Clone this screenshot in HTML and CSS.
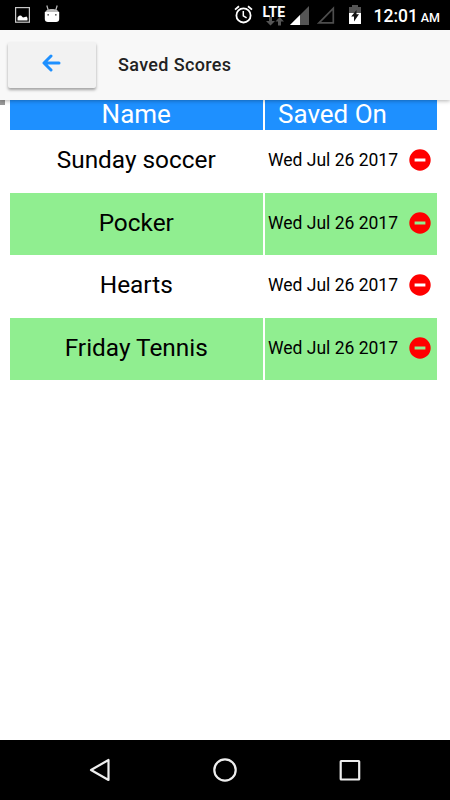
FILE: index.html
```html
<!DOCTYPE html>
<html lang="en">
<head>
    <meta charset="UTF-8">
    <meta name="viewport" content="width=device-width, initial-scale=1.0">
    <title>Saved Scores</title>
    <link rel="stylesheet" href="styles.css">
</head>
<body>
    <div class="status-bar">
        <div class="notifications">
            <svg class="icon-picture" width="15" height="16" viewBox="0 0 15 16">
                <rect x="0.6" y="0.6" width="13.8" height="14.6" fill="none" stroke="#c8c8c8" stroke-width="1.2"/>
                <path d="M2.5 13.5V10.5L4 8.8L6 8.5L8 10.5L10 10L11.5 9.5L12.5 11V13.5Z" fill="#fff"/>
            </svg>
            <svg class="icon-android" width="16" height="18" viewBox="0 0 16 18">
                <path d="M4.2 5L2.8 0.5M11.8 5L13.2 0.5" stroke="#bbb" stroke-width="1.2"/>
                <path d="M1 8C1 2.5 15 2.5 15 8Z" fill="#bbb"/>
                <path d="M0.8 7H15.2V14Q15.2 17 12 17H4Q0.8 17 0.8 14Z" fill="#fff"/>
                <rect x="3.4" y="9" width="1.6" height="1.6" fill="#666"/>
                <rect x="11" y="9" width="1.6" height="1.6" fill="#666"/>
            </svg>
        </div>
        <div class="system">
            <svg class="icon-alarm" width="19" height="19" viewBox="0 0 19 19" fill="none" stroke="#fff" stroke-width="1.8">
                <circle cx="9.5" cy="10.4" r="7.1"/>
                <path d="M9.3 6V10.8L12.6 12.8" stroke-width="1.5"/>
                <path d="M1 4.6L5 1.2M18 4.6L14 1.2"/>
            </svg>
            <div class="lte">
                <span>LTE</span>
                <svg width="18" height="9" viewBox="0 0 18 9" fill="#555">
                    <path d="M3 0H6V4H9L4.5 8.5L0 4H3ZM12 8.5V4.5H9.5L13.7 0L18 4.5H15V8.5Z"/>
                </svg>
            </div>
            <svg class="icon-signal" width="19" height="19" viewBox="0 0 19 19">
                <path d="M0 19L19 0V19Z" fill="#555"/>
                <path d="M0 19L10 9V19Z" fill="#fff"/>
            </svg>
            <svg class="icon-nosim" width="18" height="18" viewBox="0 0 18 18">
                <path d="M2 16.8L16.3 2.3V16.8Z" fill="none" stroke="#4d4d4d" stroke-width="1.7"/>
            </svg>
            <svg class="icon-battery" width="12" height="19" viewBox="0 0 12 19">
                <path d="M0 2H3V0H9V2H12V19H0Z" fill="#555"/>
                <path d="M0 8H12V19H0Z" fill="#fff"/>
                <path d="M7.5 5V9.2H10L5 16.5V11.5H2.2Z" fill="#111"/>
            </svg>
            <span class="clock">12:01 <small>AM</small></span>
        </div>
    </div>

    <div class="toolbar">
        <button class="back">
            <svg width="19" height="18" viewBox="0 0 19 18" fill="none" stroke="#1e90ff" stroke-width="3" stroke-linecap="round" stroke-linejoin="round">
                <path d="M9 2L2 9L9 16M2.5 9H17"/>
            </svg>
        </button>
        <h1>Saved Scores</h1>
    </div>

    <div class="content">
        <div class="scroll-mark"></div>
        <div class="scores">
            <div class="head name">Name</div>
            <div class="head saved">Saved On</div>

            <div class="name">Sunday soccer</div>
            <div class="date">Wed Jul 26 2017
                <svg class="remove" viewBox="0 0 22 22"><path fill-rule="evenodd" d="M11 0.3A10.7 10.7 0 1 0 11 21.7A10.7 10.7 0 1 0 11 0.3ZM5.6 9.6H16.4V12.4H5.6Z"/></svg>
            </div>

            <div class="name green">Pocker</div>
            <div class="date green">Wed Jul 26 2017
                <svg class="remove" viewBox="0 0 22 22"><path fill-rule="evenodd" d="M11 0.3A10.7 10.7 0 1 0 11 21.7A10.7 10.7 0 1 0 11 0.3ZM5.6 9.6H16.4V12.4H5.6Z"/></svg>
            </div>

            <div class="name">Hearts</div>
            <div class="date">Wed Jul 26 2017
                <svg class="remove" viewBox="0 0 22 22"><path fill-rule="evenodd" d="M11 0.3A10.7 10.7 0 1 0 11 21.7A10.7 10.7 0 1 0 11 0.3ZM5.6 9.6H16.4V12.4H5.6Z"/></svg>
            </div>

            <div class="name green">Friday Tennis</div>
            <div class="date green">Wed Jul 26 2017
                <svg class="remove" viewBox="0 0 22 22"><path fill-rule="evenodd" d="M11 0.3A10.7 10.7 0 1 0 11 21.7A10.7 10.7 0 1 0 11 0.3ZM5.6 9.6H16.4V12.4H5.6Z"/></svg>
            </div>
        </div>
    </div>

    <div class="nav-bar">
        <svg width="24" height="26" viewBox="0 0 24 26"><path d="M3 13L20.5 3V23Z"/></svg>
        <svg width="26" height="26" viewBox="0 0 26 26"><circle cx="13" cy="13" r="10.7"/></svg>
        <svg width="24" height="26" viewBox="0 0 24 26"><rect x="2.7" y="4" width="18.5" height="18.5" rx="0.5"/></svg>
    </div>
</body>
</html>
```
FILE: styles.css
```css
body {
    margin: 0;
    height: 800px;
    display: flex;
    flex-direction: column;
    overflow: hidden;
    background: #fff;
    color: #000;
    font-family: Roboto, sans-serif;
}

svg {
    display: block;
    flex: none;
}

/* Android status bar */
.status-bar {
    height: 30px;
    flex: none;
    display: flex;
    justify-content: space-between;
    background: #000;
    color: #fff;
}

.notifications,
.system {
    display: flex;
    align-items: flex-start;
}

.icon-picture {
    margin: 7px 0 0 15px;
}

.icon-android {
    margin: 5px 0 0 14px;
}

.system {
    padding-right: 10px;
}

.icon-alarm {
    margin-top: 5px;
}

.lte {
    width: 22px;
    margin: 6px 0 0 10px;
    font-size: 14px;
    font-weight: 700;
    line-height: 12px;
}

.lte svg {
    margin: -1px 0 0 3px;
}

.icon-signal {
    margin: 6px 0 0 5px;
}

.icon-nosim {
    margin: 6px 0 0 8px;
}

.icon-battery {
    margin: 5px 0 0 14px;
}

.clock {
    margin-left: 13px;
    font-size: 17.5px;
    font-weight: 500;
    line-height: 32px;
    word-spacing: -1.5px;
}

.clock small {
    font-size: 12.5px;
}

/* Toolbar */
.toolbar {
    height: 70px;
    flex: none;
    display: flex;
    align-items: center;
    background: #f8f8f8;
    box-shadow: 0 1px 4px rgba(0, 0, 0, 0.3);
    z-index: 1;
}

.back {
    width: 88px;
    height: 46px;
    margin: 0 0 0 8px;
    padding: 0 2px 5px 0;
    display: flex;
    align-items: center;
    justify-content: center;
    border: 0;
    border-radius: 2px;
    background: #f2f2f2;
    box-shadow: 0 2px 3px rgba(0, 0, 0, 0.35);
}

.toolbar h1 {
    margin: 0 0 1px 22px;
    color: #222;
    font-size: 18px;
    font-weight: 500;
    letter-spacing: 0.35px;
}

/* Score list */
.content {
    flex: 1;
    display: flex;
    align-items: flex-start;
}

.scroll-mark {
    width: 5px;
    height: 5px;
    margin-right: 5px;
    background: #999;
}

.scores {
    display: grid;
    grid-template-columns: 252.5px 172.4px;
    grid-template-rows: 30px repeat(4, 62.5px);
    column-gap: 2.5px;
}

.name {
    display: flex;
    align-items: center;
    justify-content: center;
    padding-bottom: 3px;
    font-size: 24.4px;
}

.head {
    height: 30px;
    padding-bottom: 0;
    background: #1e90ff;
    color: #fff;
    font-size: 26px;
    line-height: 28px;
    align-items: flex-start;
}

.saved {
    padding-left: 13px;
}

.date {
    display: flex;
    align-items: center;
    justify-content: space-between;
    padding: 0 6.6px 2px 3px;
    font-size: 17.5px;
}

.green {
    background: #90ee90;
}

.remove {
    width: 22px;
    height: 22px;
    fill: #f00;
}

/* Android navigation buttons */
.nav-bar {
    height: 60px;
    flex: none;
    display: flex;
    align-items: center;
    justify-content: space-between;
    padding: 0 88px;
    background: #000;
}

.nav-bar svg {
    fill: none;
    stroke: #eee;
    stroke-width: 2.2;
    stroke-linejoin: round;
}
```
